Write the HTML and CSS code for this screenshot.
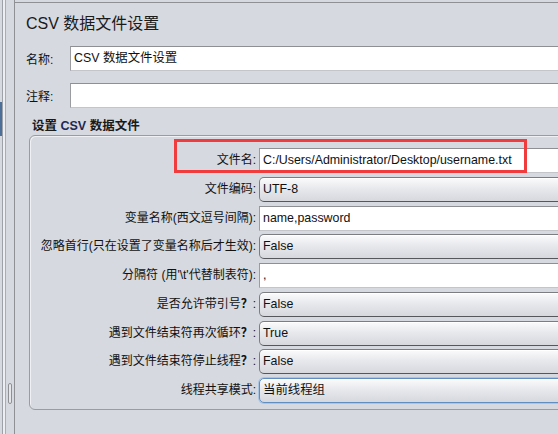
FILE: index.html
```html
<!DOCTYPE html>
<html lang="zh">
<head>
<meta charset="utf-8">
<title>CSV 数据文件设置</title>
<link rel="stylesheet" href="styles.css">
</head>
<body>
<div class="app">
  <div class="sidebar">
    <div class="mark"></div>
    <div class="thumb"></div>
  </div>
  <div class="main">
    <div class="content">
      <h1 class="title">CSV 数据文件设置</h1>
      <div class="field-row">
        <span class="row-label">名称:</span>
        <div class="input">CSV 数据文件设置</div>
      </div>
      <div class="field-row second">
        <span class="row-label">注释:</span>
        <div class="input"></div>
      </div>
      <div class="group-title">设置 <span class="csv">CSV</span> 数据文件</div>
      <div class="group">
        <div class="annot"></div>
        <div class="grid">
          <span class="glabel">文件名:</span>
          <div class="input">C:/Users/Administrator/Desktop/username.txt</div>
          <span class="glabel">文件编码:</span>
          <div class="select">UTF-8</div>
          <span class="glabel">变量名称(西文逗号间隔):</span>
          <div class="input">name,password</div>
          <span class="glabel">忽略首行(只在设置了变量名称后才生效):</span>
          <div class="select">False</div>
          <span class="glabel">分隔符 (用'\t'代替制表符):</span>
          <div class="input">,</div>
          <span class="glabel">是否允许带引号<b>？</b>:</span>
          <div class="select">False</div>
          <span class="glabel">遇到文件结束符再次循环<b>？</b>:</span>
          <div class="select">True</div>
          <span class="glabel">遇到文件结束符停止线程<b>？</b>:</span>
          <div class="select">False</div>
          <span class="glabel">线程共享模式:</span>
          <div class="select focus">当前线程组</div>
        </div>
      </div>
    </div>
  </div>
</div>
</body>
</html>
```
FILE: styles.css
```css
* { box-sizing: border-box; }
html, body {
  margin: 0;
  padding: 0;
  width: 558px;
  height: 434px;
  overflow: hidden;
  background: #d6d9df;
  font-family: "Liberation Sans", "Noto Sans CJK SC", sans-serif;
  color: #111;
}
.app {
  display: flex;
  height: 434px;
}
.sidebar {
  width: 15px;
  flex: none;
  display: flex;
  flex-direction: column;
  background: linear-gradient(to right,
    #d6d9df 0 2px, #9ea1a7 2px 3px, #eceef1 3px 5px, #a9acb2 5px 6px,
    #d6d9df 6px 14px, #8e9096 14px 15px);
}
.mark {
  width: 2px;
  height: 34px;
  margin-top: 102px;
  background: #4b6f98;
}
.thumb {
  width: 4px;
  height: 21px;
  margin: auto 0 30px 8px;
  border: 1px solid #8e9096;
  border-radius: 2px;
  background: #e4e6ea;
}
.main {
  flex: 1;
  min-width: 0;
  overflow: hidden;
  margin-top: 2px;
  border-top: 1px solid #8e9096;
}
.content {
  margin-right: -40px;
  padding-left: 11px;
}
.title {
  margin: 9px 0 0;
  font-size: 16px;
  font-weight: normal;
  line-height: 24px;
  color: #1a1a1a;
}
.field-row {
  display: flex;
  align-items: center;
  height: 25px;
  margin-top: 10px;
}
.field-row.second { margin-top: 12px; }
.row-label {
  width: 44px;
  flex: none;
  font-size: 12px;
}
.input {
  flex: 1;
  height: 25px;
  padding-left: 3px;
  background: #fff;
  border: 1px solid;
  border-color: #8d8f94 #c3c5ca #c3c5ca #9a9ca1;
  font-size: 12.4px;
  line-height: 23px;
  white-space: nowrap;
  overflow: hidden;
}
.group-title {
  margin: 10px 0 0 6px;
  font-size: 12.5px;
  font-weight: bold;
  line-height: 17px;
  color: #1a1a1a;
}
.group-title .csv { color: #1c2a55; }
.group {
  position: relative;
  margin-left: 3px;
  padding: 12px 0 6px;
  border: 1px solid #9a9ca1;
  border-radius: 6px;
  box-shadow: inset 1px 1px 0 #eef0f3;
}
.annot {
  position: absolute;
  left: 144px;
  top: 3px;
  width: 353px;
  height: 34px;
  border: 3px solid #f03c3c;
  pointer-events: none;
}
.grid {
  display: grid;
  grid-template-columns: 226px 1fr;
  grid-auto-rows: 25px;
  column-gap: 3px;
  row-gap: 3.75px;
}
.glabel {
  text-align: right;
  font-size: 12px;
  line-height: 25px;
  white-space: nowrap;
}
.glabel b { font-weight: bold; }
.grid .input { width: 100%; }
.select {
  height: 25px;
  padding-left: 3px;
  border: 1px solid #7b7d82;
  border-bottom-color: #55575c;
  border-radius: 5px;
  background: linear-gradient(#fbfbfc, #e8e9ed 45%, #d6d8de);
  box-shadow: inset 0 1px 0 #ffffff;
  font-size: 12.4px;
  line-height: 23px;
  white-space: nowrap;
}
.select.focus {
  border: 1px solid #5f8fc2;
  box-shadow: 0 0 0 1px #a9c5e4, inset 0 1px 0 #ffffff;
}
```
